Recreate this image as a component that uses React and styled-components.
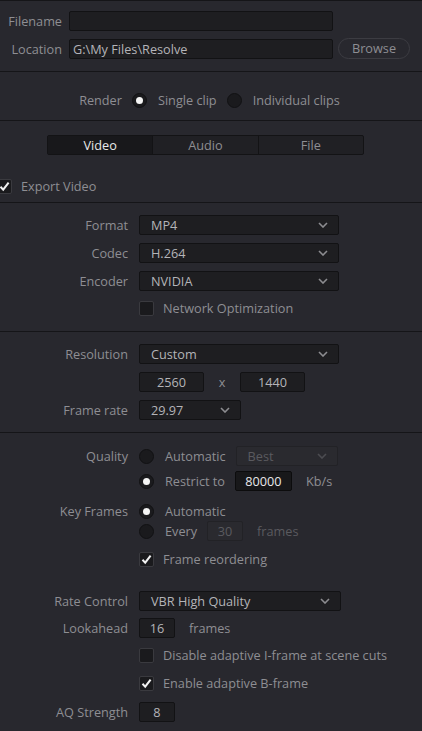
import React from 'react';
import styled, { createGlobalStyle } from 'styled-components';

const COLORS = {
  panel: '#28282e',
  divider: '#151518',
  field: '#1e1e21',
  fieldBorder: '#121214',
  label: '#8e8e93',
  value: '#b4b4b8',
  bright: '#e8e8ea',
  muted: '#5a5a5f'
};

const GlobalStyle = createGlobalStyle`
  html, body {
    margin: 0;
    padding: 0;
    background: ${COLORS.panel};
  }
  body {
    font-family: 'Open Sans', 'Noto Sans', sans-serif;
    font-size: 12.7px;
    color: ${COLORS.label};
  }
`;

const Panel = styled.div`
  width: 422px;
  min-height: 731px;
  background: ${COLORS.panel};
  border-top: 1px solid ${COLORS.divider};
  box-sizing: border-box;
  overflow: hidden;
`;

const Section = styled.section`
  padding: ${(p) => p.$pad || '0'};
  border-bottom: ${(p) => (p.$last ? 'none' : `1px solid ${COLORS.divider}`)};
`;

const Row = styled.div`
  display: grid;
  grid-template-columns: ${(p) => p.$labelWidth ?? 128}px 1fr;
  column-gap: ${(p) => p.$colGap ?? 11}px;
  align-items: ${(p) => p.$align || 'center'};
  margin-top: ${(p) => p.$mt ?? 8}px;
  &:first-child {
    margin-top: 0;
  }
`;

const Label = styled.div`
  text-align: right;
  line-height: 20px;
  white-space: nowrap;
  color: ${COLORS.label};
`;

const Controls = styled.div`
  display: flex;
  align-items: center;
  gap: ${(p) => p.$gap ?? 10}px;
  min-height: 20px;
  margin-top: ${(p) => p.$mt ?? 0}px;
`;

const Stack = styled.div`
  display: flex;
  flex-direction: column;
`;

const TextField = styled.div`
  box-sizing: border-box;
  width: ${(p) => (p.$width ? `${p.$width}px` : 'auto')};
  flex: ${(p) => (p.$width ? 'none' : '1')};
  height: 20px;
  line-height: 18px;
  padding: 0 ${(p) => (p.$center ? 0 : 3)}px;
  text-align: ${(p) => (p.$center ? 'center' : 'left')};
  border: 1px solid ${(p) => (p.$focus ? '#0c0c0d' : p.$disabled ? '#222226' : COLORS.fieldBorder)};
  border-radius: 2px;
  color: ${(p) => (p.$focus ? COLORS.bright : p.$disabled ? COLORS.muted : COLORS.value)};
  background: ${(p) => (p.$disabled ? '#2a2a2f' : p.$focus ? '#18181a' : COLORS.field)};
  white-space: nowrap;
`;

const SelectBox = styled.div`
  box-sizing: border-box;
  width: ${(p) => p.$width}px;
  height: 20px;
  display: flex;
  align-items: center;
  justify-content: space-between;
  padding: 0 10px 0 11px;
  background: ${(p) => (p.$disabled ? '#2a2a2f' : COLORS.field)};
  border: 1px solid ${(p) => (p.$disabled ? '#222226' : COLORS.fieldBorder)};
  border-radius: 2px;
  color: ${(p) => (p.$disabled ? COLORS.muted : COLORS.value)};
  white-space: nowrap;
`;

const Chevron = styled.svg`
  width: 10px;
  height: 6px;
  flex: none;
`;

const Select = ({ value, width, disabled }) => (
  <SelectBox $width={width} $disabled={disabled}>
    <span>{value}</span>
    <Chevron viewBox="0 0 10 6">
      <path
        d="M1 1l4 4 4-4"
        fill="none"
        stroke={disabled ? '#4c4c51' : '#8c8c90'}
        strokeWidth="1.6"
      />
    </Chevron>
  </SelectBox>
);

const Box = styled.span`
  box-sizing: border-box;
  width: 15px;
  height: 15px;
  flex: none;
  display: inline-flex;
  align-items: center;
  justify-content: center;
  background: #1a1a1d;
  border: 1px solid #3a3a3f;
  border-radius: 2px;
  margin-left: ${(p) => p.$shift || 0}px;
`;

const Check = ({ checked, children, shift, gap }) => (
  <Controls $gap={gap ?? 9}>
    <Box $shift={shift}>
      {checked && (
        <svg width="11" height="11" viewBox="0 0 11 11">
          <path
            d="M1.5 5.8l2.7 2.9L9.6 1.6"
            fill="none"
            stroke="#f2f2f2"
            strokeWidth="2"
          />
        </svg>
      )}
    </Box>
    <span>{children}</span>
  </Controls>
);

const Dot = styled.span`
  box-sizing: border-box;
  width: 15px;
  height: 15px;
  flex: none;
  border-radius: 50%;
  background: #1a1a1d;
  border: 1px solid #111113;
  display: inline-flex;
  align-items: center;
  justify-content: center;
  &::after {
    content: '';
    width: 7px;
    height: 7px;
    border-radius: 50%;
    background: ${(p) => (p.$on ? '#f4f4f4' : 'transparent')};
  }
`;

const Radio = ({ on, children, gap }) => (
  <Controls $gap={gap ?? 11}>
    <Dot $on={on} />
    <span>{children}</span>
  </Controls>
);

const BrowseButton = styled.div`
  box-sizing: border-box;
  width: 72px;
  height: 21px;
  line-height: 19px;
  text-align: center;
  border: 1px solid #3c3c42;
  border-radius: 11px;
  color: ${COLORS.label};
`;

const RenderRow = styled.div`
  display: flex;
  justify-content: center;
  align-items: center;
  gap: 10px;
  padding-right: 3px;
`;

const Tabs = styled.div`
  display: flex;
  width: 317px;
  height: 20px;
  margin-left: 47px;
  box-sizing: border-box;
  border: 1px solid #131315;
  border-radius: 2px;
  background: #202024;
  overflow: hidden;
`;

const Tab = styled.div`
  flex: 1;
  text-align: center;
  line-height: 18px;
  color: ${(p) => (p.$active ? COLORS.bright : COLORS.label)};
  background: ${(p) => (p.$active ? '#18181b' : 'transparent')};
  & + & {
    border-left: 1px solid #131315;
  }
`;

const Suffix = styled.span`
  color: ${(p) => (p.$muted ? COLORS.muted : COLORS.label)};
  margin-left: ${(p) => p.$ml ?? 0}px;
`;

const Times = styled.span`
  width: 36px;
  text-align: center;
  color: ${COLORS.label};
`;

const App = () => (
  <>
    <GlobalStyle />
    <Panel>
      <Section $pad="10px 0 12px">
        <Row $labelWidth={62} $colGap={7}>
          <Label>Filename</Label>
          <Controls>
            <TextField $width={264} />
          </Controls>
        </Row>
        <Row $labelWidth={62} $colGap={7} $mt={7}>
          <Label>Location</Label>
          <Controls $gap={5}>
            <TextField $width={264}>G:\My Files\Resolve</TextField>
            <BrowseButton>Browse</BrowseButton>
          </Controls>
        </Row>
      </Section>

      <Section $pad="18px 0 10px">
        <RenderRow>
          <span>Render</span>
          <Radio on>Single clip</Radio>
          <Radio>Individual clips</Radio>
        </RenderRow>
      </Section>

      <Section $pad="14px 0 6px">
        <Tabs>
          <Tab $active>Video</Tab>
          <Tab>Audio</Tab>
          <Tab>File</Tab>
        </Tabs>
        <Row $labelWidth={0} $colGap={0} $mt={21}>
          <span />
          <Check checked shift={-3} gap={9}>
            Export Video
          </Check>
        </Row>
      </Section>

      <Section $pad="12px 0 13px">
        <Row>
          <Label>Format</Label>
          <Controls>
            <Select value="MP4" width={200} />
          </Controls>
        </Row>
        <Row>
          <Label>Codec</Label>
          <Controls>
            <Select value="H.264" width={200} />
          </Controls>
        </Row>
        <Row>
          <Label>Encoder</Label>
          <Controls>
            <Select value="NVIDIA" width={200} />
          </Controls>
        </Row>
        <Row $mt={7}>
          <span />
          <Check>Network Optimization</Check>
        </Row>
      </Section>

      <Section $pad="12px 0 12px">
        <Row>
          <Label>Resolution</Label>
          <Controls>
            <Select value="Custom" width={200} />
          </Controls>
        </Row>
        <Row>
          <span />
          <Controls $gap={0}>
            <TextField $width={65} $center>2560</TextField>
            <Times>x</Times>
            <TextField $width={65} $center>1440</TextField>
          </Controls>
        </Row>
        <Row>
          <Label>Frame rate</Label>
          <Controls>
            <Select value="29.97" width={102} />
          </Controls>
        </Row>
      </Section>

      <Section $pad="13px 0 20px" $last>
        <Row $align="start">
          <Label>Quality</Label>
          <Stack>
            <Controls>
              <Radio>Automatic</Radio>
              <Select value="Best" width={102} disabled />
            </Controls>
            <Controls $gap={10} $mt={5}>
              <Radio on>Restrict to</Radio>
              <TextField $width={57} $center $focus>
                80000
              </TextField>
              <Suffix $ml={4}>Kb/s</Suffix>
            </Controls>
          </Stack>
        </Row>
        <Row $align="start" $mt={10}>
          <Label>Key Frames</Label>
          <Stack>
            <Radio on>Automatic</Radio>
            <Controls $gap={10}>
              <Radio>Every</Radio>
              <TextField $width={36} $center $disabled>
                30
              </TextField>
              <Suffix $muted $ml={4}>
                frames
              </Suffix>
            </Controls>
          </Stack>
        </Row>
        <Row>
          <span />
          <Check checked>Frame reordering</Check>
        </Row>
        <Row $mt={22}>
          <Label>Rate Control</Label>
          <Controls>
            <Select value="VBR High Quality" width={202} />
          </Controls>
        </Row>
        <Row $mt={7}>
          <Label>Lookahead</Label>
          <Controls $gap={14}>
            <TextField $width={36} $center>16</TextField>
            <Suffix>frames</Suffix>
          </Controls>
        </Row>
        <Row $mt={7}>
          <span />
          <Check>Disable adaptive I-frame at scene cuts</Check>
        </Row>
        <Row>
          <span />
          <Check checked>Enable adaptive B-frame</Check>
        </Row>
        <Row $mt={9}>
          <Label>AQ Strength</Label>
          <Controls>
            <TextField $width={36} $center>8</TextField>
          </Controls>
        </Row>
      </Section>
    </Panel>
  </>
);

export default App;
